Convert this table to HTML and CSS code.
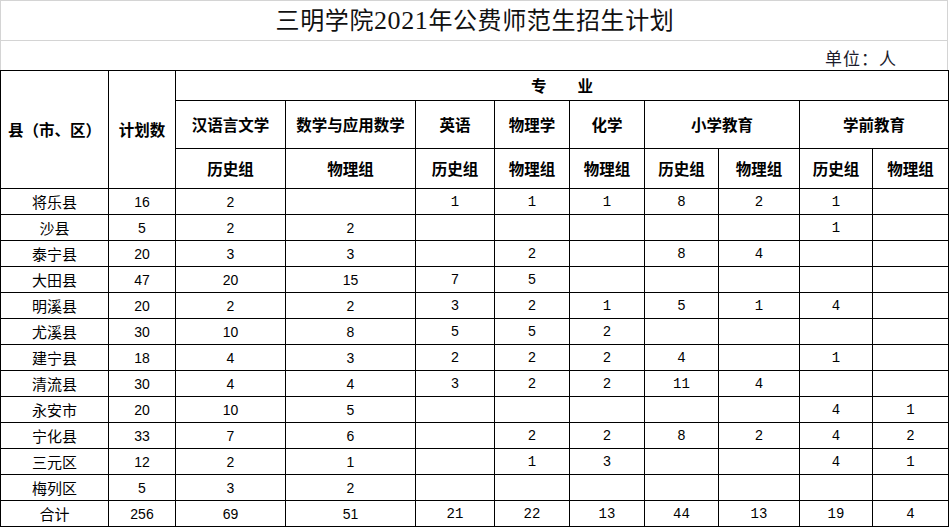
FILE: index.html
```html
<!DOCTYPE html>
<html lang="zh">
<head>
<meta charset="utf-8">
<title>三明学院2021年公费师范生招生计划</title>
<link rel="stylesheet" href="styles.css">
</head>
<body>
<div class="sheet">
  <div class="title-row"><h1 class="title">三明学院<span class="num">2021</span>年公费师范生招生计划</h1></div>
  <div class="unit-row"><span class="unit">单位：人</span></div>
  <table class="plan">
    <colgroup>
      <col class="c1"><col class="c2"><col class="c3"><col class="c4"><col class="c5"><col class="c6"><col class="c7"><col class="c8"><col class="c9"><col class="c10"><col class="c11">
    </colgroup>
    <thead>
      <tr class="h1">
        <th rowspan="3">县（市、区）</th>
        <th rowspan="3">计划数</th>
        <th colspan="9">专&emsp;&emsp;业</th>
      </tr>
      <tr class="h2">
        <th>汉语言文学</th>
        <th>数学与应用数学</th>
        <th>英语</th>
        <th>物理学</th>
        <th>化学</th>
        <th colspan="2">小学教育</th>
        <th colspan="2">学前教育</th>
      </tr>
      <tr class="h3">
        <th>历史组</th>
        <th>物理组</th>
        <th>历史组</th>
        <th>物理组</th>
        <th>物理组</th>
        <th>历史组</th>
        <th>物理组</th>
        <th>历史组</th>
        <th>物理组</th>
      </tr>
    </thead>
    <tbody>
      <tr><td>将乐县</td><td>16</td><td>2</td><td></td><td class="m">1</td><td class="m">1</td><td class="m">1</td><td class="m">8</td><td class="m">2</td><td class="m">1</td><td class="m"></td></tr>
      <tr><td>沙县</td><td>5</td><td>2</td><td>2</td><td class="m"></td><td class="m"></td><td class="m"></td><td class="m"></td><td class="m"></td><td class="m">1</td><td class="m"></td></tr>
      <tr><td>泰宁县</td><td>20</td><td>3</td><td>3</td><td class="m"></td><td class="m">2</td><td class="m"></td><td class="m">8</td><td class="m">4</td><td class="m"></td><td class="m"></td></tr>
      <tr><td>大田县</td><td>47</td><td>20</td><td>15</td><td class="m">7</td><td class="m">5</td><td class="m"></td><td class="m"></td><td class="m"></td><td class="m"></td><td class="m"></td></tr>
      <tr><td>明溪县</td><td>20</td><td>2</td><td>2</td><td class="m">3</td><td class="m">2</td><td class="m">1</td><td class="m">5</td><td class="m">1</td><td class="m">4</td><td class="m"></td></tr>
      <tr><td>尤溪县</td><td>30</td><td>10</td><td>8</td><td class="m">5</td><td class="m">5</td><td class="m">2</td><td class="m"></td><td class="m"></td><td class="m"></td><td class="m"></td></tr>
      <tr><td>建宁县</td><td>18</td><td>4</td><td>3</td><td class="m">2</td><td class="m">2</td><td class="m">2</td><td class="m">4</td><td class="m"></td><td class="m">1</td><td class="m"></td></tr>
      <tr><td>清流县</td><td>30</td><td>4</td><td>4</td><td class="m">3</td><td class="m">2</td><td class="m">2</td><td class="m">11</td><td class="m">4</td><td class="m"></td><td class="m"></td></tr>
      <tr><td>永安市</td><td>20</td><td>10</td><td>5</td><td class="m"></td><td class="m"></td><td class="m"></td><td class="m"></td><td class="m"></td><td class="m">4</td><td class="m">1</td></tr>
      <tr><td>宁化县</td><td>33</td><td>7</td><td>6</td><td class="m"></td><td class="m">2</td><td class="m">2</td><td class="m">8</td><td class="m">2</td><td class="m">4</td><td class="m">2</td></tr>
      <tr><td>三元区</td><td>12</td><td>2</td><td>1</td><td class="m"></td><td class="m">1</td><td class="m">3</td><td class="m"></td><td class="m"></td><td class="m">4</td><td class="m">1</td></tr>
      <tr><td>梅列区</td><td>5</td><td>3</td><td>2</td><td class="m"></td><td class="m"></td><td class="m"></td><td class="m"></td><td class="m"></td><td class="m"></td><td class="m"></td></tr>
      <tr><td>合计</td><td>256</td><td>69</td><td>51</td><td class="m">21</td><td class="m">22</td><td class="m">13</td><td class="m">44</td><td class="m">13</td><td class="m">19</td><td class="m">4</td></tr>
    </tbody>
  </table>
</div>
</body>
</html>
```
FILE: styles.css
```css
html, body {
  margin: 0;
  padding: 0;
  background: #ffffff;
}
body {
  font-family: "Noto Sans CJK SC", "Liberation Sans", sans-serif;
  color: #000;
}
.sheet {
  width: 949px;
}
.title-row {
  height: 39px;
  width: 946px;
  border-top: 1px solid #d4d4d4;
  border-left: 1px solid #d4d4d4;
  border-right: 1px solid #d4d4d4;
  border-bottom: 1px solid #d4d4d4;
  display: flex;
  align-items: center;
  justify-content: center;
}
.title {
  margin: 0;
  font-size: 24px;
  font-weight: 400;
  letter-spacing: 0.6px;
  color: #111;
  line-height: 1;
  padding-left: 2px;
}
.title .num {
  font-family: "Liberation Serif", serif;
  font-size: 26px;
}
.unit-row {
  height: 29px;
  width: 946px;
  border-left: 1px solid #d4d4d4;
  border-right: 1px solid #d4d4d4;
  display: flex;
  align-items: center;
  justify-content: flex-end;
}
.unit {
  font-size: 17px;
  color: #1b1b2b;
  margin-right: 50px;
  margin-top: 3px;
  letter-spacing: 1px;
}
.plan {
  border-collapse: collapse;
  table-layout: fixed;
  width: 948px;
}
.plan th, .plan td {
  border: 1px solid #000;
  padding: 0;
  text-align: center;
  vertical-align: middle;
  font-size: 14px;
  line-height: 1;
  overflow: hidden;
  white-space: nowrap;
}
.plan th {
  font-weight: 700;
  font-size: 15.5px;
}
.plan td {
  height: 25px;
  font-family: "Liberation Sans", "Noto Sans CJK SC", sans-serif;
}
.plan td:first-child {
  font-family: "Noto Sans CJK SC", sans-serif;
  font-size: 15px;
}
.plan td.m {
  font-family: "Liberation Mono", "DejaVu Sans Mono", monospace;
  font-size: 14px;
}
.h1 th { height: 29px; }
.h2 th { height: 47px; }
.h3 th { height: 39px; }
.c1 { width: 108px; }
.c2 { width: 67px; }
.c3 { width: 110px; }
.c4 { width: 130px; }
.c5 { width: 79px; }
.c6 { width: 75px; }
.c7 { width: 75px; }
.c8 { width: 74px; }
.c9 { width: 81px; }
.c10 { width: 73px; }
.c11 { width: 76px; }
```
